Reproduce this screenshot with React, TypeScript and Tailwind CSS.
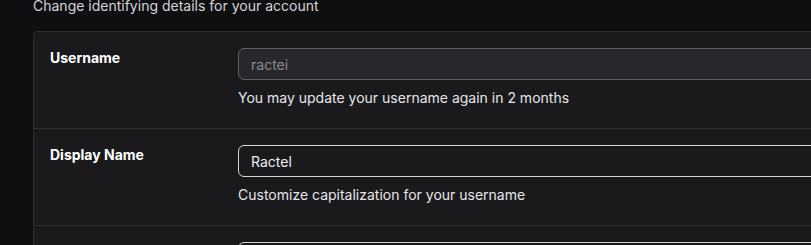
import React from 'react';

interface FieldRowProps {
  label: string;
  value: string;
  hint: string;
  disabled?: boolean;
  last?: boolean;
}

const FieldRow: React.FC<FieldRowProps> = ({ label, value, hint, disabled, last }) => {
  return (
    <div className={`flex pt-4 pb-5 ${last ? '' : 'border-b border-[#2f2f33]'}`}>
      <div className="w-[204px] shrink-0 pl-4 text-[14px] leading-5 font-bold text-white">{label}</div>
      <div className="flex-1 flex flex-col">
        <input
          defaultValue={value}
          disabled={disabled}
          className={`h-[32px] w-full rounded-[6px] border px-3 text-[14px] outline-none ${
            disabled
              ? 'bg-[#28282c] border-[#5e5e62] text-[#8a8a8e]'
              : 'bg-[#1a1a1c] border-[#d6d6d8] text-[#ececec]'
          }`}
        />
        <p className="mt-2 text-[14px] leading-5 text-[#e6e6e8]">{hint}</p>
      </div>
    </div>
  );
};

export default function App() {
  return (
    <div
      className="h-screen w-full overflow-hidden bg-[#0f0f11] pl-[33px]"
      style={{ fontFamily: 'Inter, "Noto Sans", sans-serif' }}
    >
      <p className="-mt-[4px] text-[14px] leading-5 text-[#d4d4d6]">Change identifying details for your account</p>
      <div className="mt-[15px] w-[900px] rounded-[4px] border border-[#2f2f33] bg-[#1a1a1c]">
        <FieldRow
          label="Username"
          value="ractei"
          hint="You may update your username again in 2 months"
          disabled
        />
        <FieldRow
          label="Display Name"
          value="Ractel"
          hint="Customize capitalization for your username"
        />
        <FieldRow label="" value="" hint="" last />
      </div>
    </div>
  );
}
